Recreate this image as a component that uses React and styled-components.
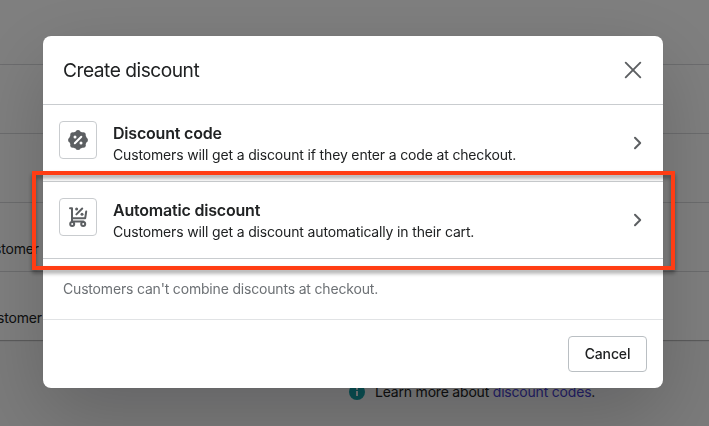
import React from 'react';
import styled, { createGlobalStyle } from 'styled-components';

const GlobalStyle = createGlobalStyle`
  * { box-sizing: border-box; }
  body {
    margin: 0;
    font-family: Inter, 'Liberation Sans', sans-serif;
    font-size: 14px;
    line-height: 20px;
    letter-spacing: -.155px;
    color: #202223;
    overflow: hidden;
  }
  h2, h3, p { margin: 0; }
  button { font-family: inherit; color: inherit; }
`

const Page = styled.div`
  height: 100vh;
  background: #f6f6f7;
  overflow: hidden;
`

const Table = styled.div`
  background: #fff;
  box-shadow: 0 1px 1px rgba(0, 0, 0, .25);
`

const TableRow = styled.div`
  display: flex;
  height: ${({ $first }) => $first ? 64 : 69}px;
  padding-top: 36px;
  border-top: ${({ $first }) => $first ? 'none' : '1px solid #d8d9dc'};
`

const Cell = styled.div`
  display: flex;
  justify-content: flex-end;
  width: ${({ $width }) => $width}px;
  overflow: hidden;
  white-space: nowrap;
`

const Help = styled.div`
  display: flex;
  align-items: center;
  gap: 10px;
  padding: 42px 0 0 349px;
  letter-spacing: -.2px;
`

const Link = styled.span`
  color: #463fd0;
`

const Overlay = styled.div`
  position: fixed;
  inset: 0;
  display: flex;
  align-items: flex-start;
  padding: 36px 46px 0 43px;
  background: rgba(0, 0, 0, .5);
`

const Modal = styled.div`
  flex: 1;
  height: 352px;
  background: #fff;
  border-radius: 8px;
  box-shadow: 0 26px 80px rgba(0, 0, 0, .2), 0 0 1px rgba(0, 0, 0, .2);
`

const Header = styled.div`
  display: flex;
  align-items: center;
  justify-content: space-between;
  height: 69px;
  padding: 0 20px;
  border-bottom: 1px solid #c9cccf;
`

const Title = styled.h2`
  font-size: 19.2px;
  font-weight: 400;
  line-height: 28px;
  letter-spacing: -.5px;
`

const Option = styled.div`
  display: flex;
  height: 77px;
  padding: 16px 21px 0 16px;
  border-bottom: 1px solid #c9cccf;
`

const IconBox = styled.div`
  display: flex;
  align-items: center;
  justify-content: center;
  width: 38px;
  height: 38px;
  border: 1px solid #c9cccf;
  border-radius: 4px;
`

const OptionText = styled.div`
  flex: 1;
  margin-left: 16px;
`

const OptionTitle = styled.h3`
  font-size: 16px;
  font-weight: 600;
  line-height: 24px;
  letter-spacing: -.2px;
`

const Arrow = styled.div`
  padding-top: 14px;
`

const Note = styled.p`
  height: 60px;
  padding: 20px;
  color: #6d7175;
  letter-spacing: -.18px;
`

const Footer = styled.div`
  display: flex;
  justify-content: flex-end;
  padding: 16px 16px 0;
  border-top: 1px solid #e1e3e5;
`

const Button = styled.button`
  width: 79px;
  height: 36px;
  padding: 0 0 2px;
  border: 1px solid #babfc3;
  border-radius: 4px;
  background: #fff;
  font-size: 14px;
  font-weight: 500;
  letter-spacing: -.15px;
`

const Highlight = styled.div`
  position: absolute;
  left: 32px;
  top: 171px;
  width: 643px;
  height: 99px;
  border: 4px solid #ff3d14;
  filter: drop-shadow(0 3px 2px rgba(0, 0, 0, .4));
`

// scalloped edge: eight lobes around the centre
const lobes = [0, 1, 2, 3, 4, 5, 6, 7].map((n) => n * Math.PI / 4)

const DiscountIcon = () => (
  <svg width="20" height="20" viewBox="0 0 20 20" fill="#5c5f62">
    <circle cx="10" cy="10" r="8.8" />
    {lobes.map((a) => (
      <circle key={a} cx={10 + 7.4 * Math.cos(a)} cy={10 + 7.4 * Math.sin(a)} r="2.5" />
    ))}
    <path d="M6.8 13.3l6.5-6.6" stroke="#fff" strokeWidth="2" strokeLinecap="round" />
    <circle cx="7" cy="7" r="1.5" fill="#fff" />
    <circle cx="13" cy="13" r="1.5" fill="#fff" />
  </svg>
)

const CartIcon = () => (
  <svg width="20" height="20" viewBox="0 0 20 20" fill="none" stroke="#5c5f62" strokeWidth="2" strokeLinecap="round">
    <path d="M2 1.3h2v13M4 11.2h13.2l1-6.6M4 14.6h11.5" strokeLinejoin="round" />
    <circle cx="4.2" cy="17" r="2" />
    <circle cx="15.2" cy="17" r="2" />
    <path d="M8.4 7.4l5.8-5.9" />
    <circle cx="8.6" cy="1.9" r="1.5" fill="#5c5f62" stroke="none" />
    <circle cx="14" cy="7.2" r="1.5" fill="#5c5f62" stroke="none" />
  </svg>
)

const Chevron = () => (
  <svg width="9" height="14" viewBox="0 0 9 14" fill="none" stroke="#5c5f62" strokeWidth="2">
    <path d="M2 1.8l5.2 5.2-5.2 5.2" strokeLinecap="round" strokeLinejoin="round" />
  </svg>
)

const CloseIcon = () => (
  <svg width="20" height="20" viewBox="0 0 20 20" stroke="#5c5f62" strokeWidth="1.9" strokeLinecap="round">
    <path d="M2.7 2.7l14.6 14.6M17.3 2.7L2.7 17.3" />
  </svg>
)

const InfoIcon = () => (
  <svg width="16" height="16" viewBox="0 0 16 16">
    <circle cx="8" cy="8" r="8" fill="#14a0a8" />
    <path d="M8 7v5M8 3.7v2" stroke="#f6f6f7" strokeWidth="2" />
  </svg>
)

const OPTIONS = [
  {
    title: 'Discount code',
    desc: 'Customers will get a discount if they enter a code at checkout.',
    icon: <DiscountIcon />,
  },
  {
    title: 'Automatic discount',
    desc: 'Customers will get a discount automatically in their cart.',
    icon: <CartIcon />,
  },
]

function Background() {
  return (
    <Page>
      <Table>
        <TableRow $first />
        <TableRow />
        <TableRow />
        <TableRow><Cell $width={39}>Customer</Cell></TableRow>
        <TableRow><Cell $width={42}>Customer</Cell></TableRow>
      </Table>
      <Help>
        <InfoIcon />
        <span>Learn more about <Link>discount codes</Link>.</span>
      </Help>
    </Page>
  )
}

function App() {
  return (
    <>
      <GlobalStyle />
      <Background />
      <Overlay>
        <Modal>
          <Header>
            <Title>Create discount</Title>
            <CloseIcon />
          </Header>
          {OPTIONS.map((el) => (
            <Option key={el.title}>
              <IconBox>{el.icon}</IconBox>
              <OptionText>
                <OptionTitle>{el.title}</OptionTitle>
                <p>{el.desc}</p>
              </OptionText>
              <Arrow><Chevron /></Arrow>
            </Option>
          ))}
          <Note>Customers can't combine discounts at checkout.</Note>
          <Footer>
            <Button>Cancel</Button>
          </Footer>
        </Modal>
        <Highlight />
      </Overlay>
    </>
  )
}

export default App;
